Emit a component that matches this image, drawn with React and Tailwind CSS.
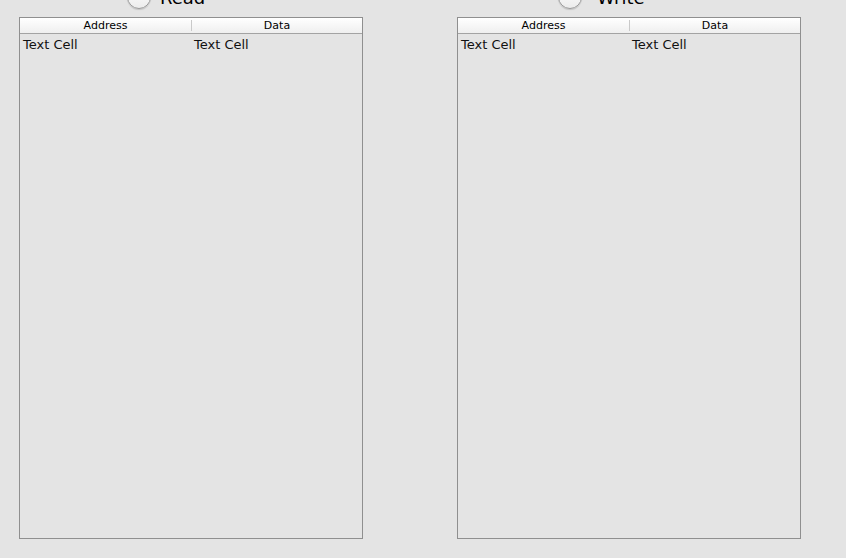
export default function App() {
  const panels = [
    { label: "Read", offset: "ml-[108px] gap-[9px]" },
    { label: "Write", offset: "ml-[101px] gap-[15px]" },
  ]

  return (
    <div className="w-[846px] h-[558px] overflow-hidden bg-[#e4e4e4] font-['DejaVu_Sans',sans-serif] text-[#111]">
      <div className="flex gap-[94px] pl-[19px]">
        {panels.map((p) => (
          <div key={p.label} className="w-[344px] flex flex-col">
            <div className="h-[17px] flex items-start">
              <div className={`${p.offset} -mt-[15px] flex items-center`}>
                <div className="w-[24px] h-[24px] rounded-full border border-[#9a9a9a] bg-gradient-to-b from-[#ffffff] to-[#ececec] shadow-[0_1px_1px_rgba(0,0,0,0.15)]" />
                <span className="text-[18px] leading-[23px] text-black">{p.label}</span>
              </div>
            </div>
            <div className="h-[522px] border border-[#8f8f8f] flex flex-col">
              <div className="h-[16px] flex border-b border-[#a3a3a3] bg-gradient-to-b from-[#ffffff] to-[#efefef] text-[11px] leading-[15px] text-black">
                <div className="w-[171px] text-center">Address</div>
                <div className="w-px my-[2px] bg-[#c9c9c9]" />
                <div className="flex-1 text-center">Data</div>
              </div>
              <div className="flex text-[13px] leading-[20px] pt-[1px]">
                <div className="w-[172px] pl-[3px]">Text Cell</div>
                <div className="flex-1 pl-[2px]">Text Cell</div>
              </div>
            </div>
          </div>
        ))}
      </div>
    </div>
  )
}
